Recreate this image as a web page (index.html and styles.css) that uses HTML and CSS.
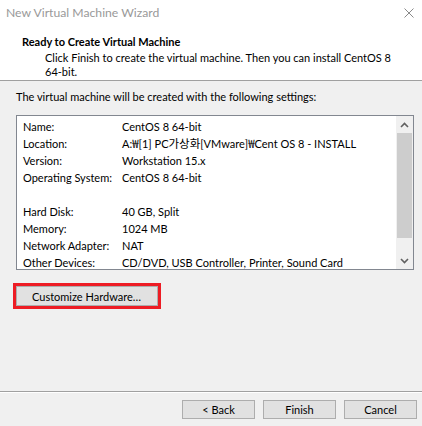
FILE: index.html
```html
<!DOCTYPE html>
<html>
<head>
<meta charset="utf-8">
<link rel="stylesheet" href="styles.css">
</head>
<body>
<div class="window">
  <div class="titlebar">
    <span class="title">New Virtual Machine Wizard</span>
    <svg class="close" width="10" height="10" viewBox="0 0 10 10"><path d="M0.5 0.5 L9.5 9.5 M9.5 0.5 L0.5 9.5" stroke="#8a8a8a" stroke-width="1" fill="none"/></svg>
  </div>
  <div class="header">
    <div class="h-title">Ready to Create Virtual Machine</div>
    <div class="h-sub">Click Finish to create the virtual machine. Then you can install CentOS 8<br>64-bit.</div>
  </div>
  <div class="content">
    <div class="intro">The virtual machine will be created with the following settings:</div>
    <div class="listbox">
      <div class="rows">
        <div class="row"><span class="label">Name:</span><span class="value">CentOS 8 64-bit</span></div>
        <div class="row"><span class="label">Location:</span><span class="value">A:<span class="kr">₩</span>[1] PC<span class="kr">가상화</span>[VMware]<span class="kr">₩</span>Cent OS 8 - INSTALL</span></div>
        <div class="row"><span class="label">Version:</span><span class="value">Workstation 15.x</span></div>
        <div class="row"><span class="label">Operating System:</span><span class="value">CentOS 8 64-bit</span></div>
        <div class="row"><span class="label"></span><span class="value"></span></div>
        <div class="row"><span class="label">Hard Disk:</span><span class="value">40 GB, Split</span></div>
        <div class="row"><span class="label">Memory:</span><span class="value">1024 MB</span></div>
        <div class="row"><span class="label">Network Adapter:</span><span class="value">NAT</span></div>
        <div class="row"><span class="label">Other Devices:</span><span class="value">CD/DVD, USB Controller, Printer, Sound Card</span></div>
      </div>
      <div class="scrollbar">
        <div class="sb-btn"><svg width="9" height="6" viewBox="0 0 9 6"><path d="M1 5 L4.5 1.5 L8 5" stroke="#606060" stroke-width="1.6" fill="none"/></svg></div>
        <div class="sb-track"><div class="sb-thumb"></div></div>
        <div class="sb-btn"><svg width="9" height="6" viewBox="0 0 9 6"><path d="M1 1 L4.5 4.5 L8 1" stroke="#606060" stroke-width="1.6" fill="none"/></svg></div>
      </div>
    </div>
    <div class="highlight"><button class="btn custom">Customize Hardware…</button></div>
  </div>
  <div class="footer">
    <button class="btn">&lt; Back</button>
    <button class="btn">Finish</button>
    <button class="btn">Cancel</button>
  </div>
</div>
</body>
</html>
```
FILE: styles.css
```css
* { box-sizing: border-box; }
html, body { margin: 0; padding: 0; }
body {
  width: 422px;
  height: 426px;
  background: #f0f0f0;
  font-family: Lato, "Noto Sans", sans-serif;
  font-size: 11px;
  color: #000;
  overflow: hidden;
}
.window {
  display: flex;
  flex-direction: column;
  height: 426px;
}
.titlebar {
  height: 25px;
  background: #fff;
  display: flex;
  align-items: center;
  padding-left: 6px;
  padding-right: 8px;
}
.title {
  flex: 1;
  color: #999;
  font-size: 12.2px;
}
.close { display: block; }
.header {
  background: #fff;
  height: 56px;
  border-bottom: 1px solid #a0a0a0;
  padding-top: 9px;
}
.h-title {
  font-weight: bold;
  line-height: 16px;
  padding-left: 22px;
}
.h-sub {
  line-height: 14px;
  padding-left: 45px;
  margin-top: 1px;
  white-space: nowrap;
}
.content {
  padding: 8px 8px 0 16px;
}
.intro {
  line-height: 16px;
}
.listbox {
  margin-top: 10px;
  height: 155px;
  border: 1px solid #828790;
  background: #fff;
  display: flex;
}
.rows {
  flex: 1;
  padding: 2px 0 0 6px;
}
.row {
  display: flex;
  height: 17px;
  line-height: 17px;
  white-space: nowrap;
}
.label { width: 99px; flex: none; }
.kr {
  font-family: "Noto Sans CJK KR", sans-serif;
  font-size: 11.5px;
}
.scrollbar {
  width: 17px;
  background: #f0f0f0;
  display: flex;
  flex-direction: column;
}
.sb-btn {
  height: 17px;
  display: flex;
  align-items: center;
  justify-content: center;
}
.sb-btn svg { display: block; }
.sb-track {
  flex: 1;
  padding: 0 1px;
}
.sb-thumb {
  height: 105px;
  background: #cdcdcd;
}
.highlight {
  margin: 13px 0 0 -3px;
  width: 148px;
  height: 26px;
  border: 3px solid #ed1c24;
}
.btn {
  font-family: inherit;
  font-size: 11px;
  color: #000;
  background: #e1e1e1;
  border: 1px solid #adadad;
  padding: 0;
  margin: 0;
  height: 19px;
  width: 73px;
  line-height: 17px;
}
.custom {
  display: block;
  width: 142px;
  height: 20px;
  text-align: left;
  padding-left: 15px;
}
.footer {
  margin-top: auto;
  height: 35px;
  border-top: 1px solid #a0a0a0;
  box-shadow: inset 0 1px 0 #fff;
  display: flex;
  justify-content: flex-end;
  gap: 8px;
  padding: 8px 5px 0 0;
}
```
